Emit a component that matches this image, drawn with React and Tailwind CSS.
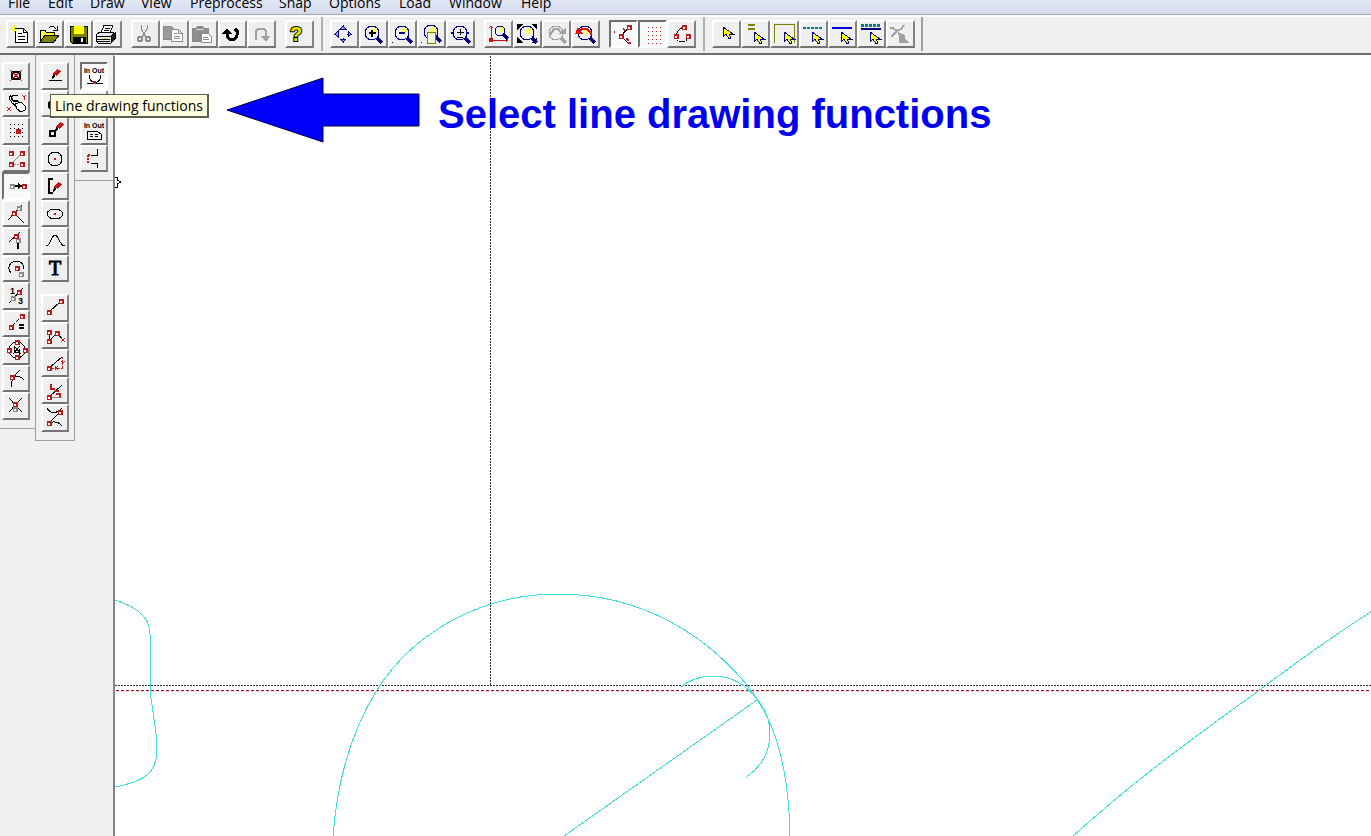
import clsx from "clsx";

const RED = "#b91c1c";
const NAVY = "#000080";
const GRAY = "#8a8a8a";
const OLIVE = "#808000";

const menus = [
  { label: "File", width: "w-[40px]" },
  { label: "Edit", width: "w-[42px]" },
  { label: "Draw", width: "w-[51px]" },
  { label: "View", width: "w-[49px]" },
  { label: "Preprocess", width: "w-[89px]" },
  { label: "Snap", width: "w-[50px]" },
  { label: "Options", width: "w-[70px]" },
  { label: "Load", width: "w-[50px]" },
  { label: "Window", width: "w-[72px]" },
  { label: "Help", width: "w-[40px]" },
];

/* ---------- small icon parts ---------- */

function Node({ x, y, color = RED }) {
  return (
    <>
      <rect x={x - 2} y={y - 2} width="5" height="5" fill={color} stroke="none" />
      <rect x={x - 1} y={y} width="2" height="2" fill="#fff" stroke="none" />
    </>
  );
}

function Pencil({ x = 0, y = 0 }) {
  return (
    <g transform={`translate(${x} ${y})`} stroke="none">
      <path d="M5 0l4 2-4 5-4-2z" fill="#c01818" />
      <path d="M1 5l3 2-4 3z" fill="#000" />
    </g>
  );
}

function Cursor({ x, y }) {
  return (
    <path
      transform={`translate(${x} ${y})`}
      d="M0 0v10l3-3 3 5 2-1-2-4h4z"
      fill="#ffff00"
      stroke={NAVY}
      strokeWidth="1"
    />
  );
}

function Lens({ x = 14, y = 13, r = 7, color = NAVY, shine = "#ffff66" }) {
  return (
    <g fill="none" stroke={color}>
      <circle cx={x + 2} cy={y - 2} r="3" fill={shine} stroke="none" />
      <circle cx={x} cy={y} r={r} strokeWidth="1" />
      <path d={`M${x + r - 2} ${y + r - 2}l5 5`} strokeWidth="3" />
    </g>
  );
}

function InOut() {
  return (
    <text x="14" y="11" textAnchor="middle" fontSize="7" fontWeight="700" fill="#000" stroke="none">
      In Out
    </text>
  );
}

/* ---------- top toolbar ---------- */

const fileTools = [
  {
    name: "New",
    icon: (
      <>
        <path d="M9 8h8l4 4v10H9z" fill="#fff" />
        <path d="M17 8v4h4M12 13h4M12 16h7M12 19h7" />
        <path d="M4 9h7M8 5v7M5 6l5 5" stroke="#f5f500" />
      </>
    ),
  },
  {
    name: "Open",
    icon: (
      <>
        <path d="M5 22V11l2-1h3l1 2h8v3" fill="#ffff33" />
        <path d="M5 22l5-7h14l-5 7z" fill={OLIVE} />
        <path d="M14 8c2-3 5-2 7 1M22 6v4h-4" />
      </>
    ),
  },
  {
    name: "Save",
    icon: (
      <>
        <path d="M6 6h17v17H8l-2-2z" fill={OLIVE} />
        <path d="M10 6h10v8H10z" fill="#ffff00" stroke="none" />
        <path d="M9 17h12v6H9z" fill="#000" />
        <path d="M17 18h2v4h-2z" fill="#fff" stroke="none" />
      </>
    ),
  },
  {
    name: "Print",
    icon: (
      <>
        <path d="M8 13l3-8h9l-3 8z" fill="#fff" />
        <path d="M12 8h5M11 10h5" />
        <path d="M3 15l4-3h13l2 2v5l-4 4H5l-2-3z" fill="#e8e8e8" />
        <path d="M3 16h15l4-3M18 16v7M4 19h13M5 21h12" />
        <path d="M18 17l4-4v5l-4 4z" fill="#222" />
        <path d="M10 18h4" stroke="#e5e500" />
      </>
    ),
  },
];

const editTools = [
  {
    name: "Cut",
    icon: (
      <g stroke={GRAY}>
        <path d="M10 5v4l5 8M16 5v4l-5 8" />
        <circle cx="9" cy="19" r="2" strokeWidth="2" />
        <circle cx="17" cy="19" r="2" strokeWidth="2" />
      </g>
    ),
  },
  {
    name: "Copy",
    icon: (
      <g stroke={GRAY}>
        <path d="M3 6h8l4 4v9H3z" fill="#9a9a9a" />
        <path d="M11 9h7l4 4v8H11z" fill="#fff" />
        <path d="M18 9v4h4M14 13h3M14 16h6M14 18h6" />
      </g>
    ),
  },
  {
    name: "Paste",
    icon: (
      <g stroke={GRAY}>
        <path d="M3 8h4l2-2h4l2 2h4v13H3z" fill="#8f8f8f" />
        <path d="M7 9h8" stroke="#ddd" />
        <path d="M12 13h7l3 3v6H12z" fill="#fff" />
        <path d="M14 17h5M14 19h6" />
      </g>
    ),
  },
  {
    name: "Undo",
    icon: (
      <>
        <path d="M9 11v4c0 6 10 6 10 0v-4l-2-2" strokeWidth="3" />
        <path d="M4 14l5-6 5 6z" fill="#000" stroke="none" />
      </>
    ),
  },
  {
    name: "Redo",
    icon: (
      <g stroke="#a0a0a0">
        <path d="M9 20v-9l2-2h6l2 2v7" strokeWidth="2" />
        <path d="M14 16h9l-4 6z" fill="#a0a0a0" stroke="none" />
      </g>
    ),
  },
];

const helpTools = [
  {
    name: "Help",
    icon: (
      <text
        x="11"
        y="21"
        textAnchor="middle"
        fontSize="20"
        fontWeight="700"
        fill="#e8e800"
        stroke="#000"
        strokeWidth="2"
        paintOrder="stroke"
      >
        ?
      </text>
    ),
  },
];

const zoomTools = [
  {
    name: "Pan",
    icon: (
      <g stroke={NAVY}>
        <path d="M13 5v5M13 18v5M4 14h5M17 14h5" />
        <path d="M10 9l3-3 3 3zM10 19l3 3 3-3zM8 11l-3 3 3 3zM18 11l3 3-3 3z" fill="#9a9ad0" />
      </g>
    ),
  },
  {
    name: "Zoom in",
    icon: (
      <>
        <Lens x={13} />
        <path d="M10 13h7M13 10v7" strokeWidth="2" />
      </>
    ),
  },
  {
    name: "Zoom out",
    icon: (
      <>
        <Lens />
        <path d="M11 13h6" stroke={NAVY} strokeWidth="2" />
        <path d="M4 22h1" stroke={NAVY} />
      </>
    ),
  },
  {
    name: "Zoom window",
    icon: (
      <>
        <Lens y={12} />
        <path d="M10 12h8v11h-8z" fill="#f5f5d8" stroke={OLIVE} />
        <path d="M4 22h1" stroke={NAVY} />
      </>
    ),
  },
  {
    name: "Zoom scale",
    icon: (
      <>
        <Lens shine="#e8e8f8" />
        <path d="M11 12h7M14 9v6M11 17h6" />
        <path d="M4 13l4-2v4zM24 13l-4-2v4z" fill={NAVY} stroke="none" />
      </>
    ),
  },
];

const viewTools = [
  {
    name: "Zoom origin",
    icon: (
      <>
        <path d="M7 6v14h17M5 8l2-2 2 2M22 18l2 2-2 2" stroke="#d01010" />
        <circle cx="7" cy="20" r="2" fill="#d01010" stroke="#d01010" />
        <Lens x={16} y={11} r={5} />
      </>
    ),
  },
  {
    name: "Zoom all",
    icon: (
      <>
        <path d="M4 4h6l-6 6zM18 4h6v6zM4 17v6h6zM24 17v6h-6z" fill="#000" stroke="none" />
        <Lens />
      </>
    ),
  },
  {
    name: "Zoom next",
    icon: (
      <>
        <Lens color="#a0a0a0" shine="#eee" />
        <path d="M8 15l4-6h4l4 5" stroke="#a0a0a0" strokeWidth="2" />
        <path d="M16 14h8V8z" fill="#a0a0a0" stroke="none" />
      </>
    ),
  },
  {
    name: "Zoom previous",
    icon: (
      <>
        <Lens />
        <path d="M8 11l3-2h5l4 4v2" stroke="#d81010" strokeWidth="2" />
        <path d="M4 14l3-7 5 7z" fill="#d81010" stroke="none" />
      </>
    ),
  },
];

const snapTools = [
  {
    name: "Snap to node",
    pressed: true,
    icon: (
      <>
        <path d="M20 7l-8 9 7 7" />
        <path d="M5 12h1M14 9l2 1M17 19l3 1M19 23h3" stroke={RED} strokeWidth="2" />
        <Node x={20} y={7} />
        <Node x={12} y={16} />
      </>
    ),
  },
  {
    name: "Snap to grid",
    pressed: true,
    icon: (
      <path
        d="M10 7h13M10 11h13M10 15h13M10 19h13M10 23h13"
        stroke="#b52a2a"
        strokeWidth="1"
        strokeDasharray="1 3"
      />
    ),
  },
  {
    name: "Close contour",
    icon: (
      <>
        <path d="M17 7c-4 1-7 4-8 9c0 8 12 8 12 0" />
        <Node x={17} y={7} />
        <Node x={9} y={16} />
        <Node x={21} y={16} />
      </>
    ),
  },
];

const selectTools = [
  { name: "Select", icon: <Cursor x={11} y={7} /> },
  {
    name: "Select layer",
    icon: (
      <>
        <path d="M7 5h7M7 9h7" stroke={OLIVE} strokeWidth="2" />
        <Cursor x={13} y={12} />
      </>
    ),
  },
  {
    name: "Select window",
    icon: (
      <>
        <path d="M4 23V4h20v19" stroke={OLIVE} />
        <Cursor x={14} y={12} />
      </>
    ),
  },
  {
    name: "Select dashed",
    icon: (
      <>
        <path d="M4 8h20" stroke="#008080" strokeWidth="2" strokeDasharray="3 1" />
        <Cursor x={13} y={12} />
      </>
    ),
  },
  {
    name: "Select line",
    icon: (
      <>
        <path d="M4 8h20" stroke="#0000e0" strokeWidth="2" />
        <Cursor x={13} y={12} />
      </>
    ),
  },
  {
    name: "Select all lines",
    icon: (
      <>
        <path d="M4 5h20" stroke="#008080" strokeWidth="3" strokeDasharray="3 1" />
        <path d="M4 9h20" stroke={NAVY} strokeWidth="2" />
        <Cursor x={13} y={12} />
      </>
    ),
  },
  {
    name: "Trim",
    icon: (
      <g stroke="#a0a0a0">
        <path d="M4 8h3l4 3 4-2 3-4M11 11L5 17" strokeWidth="2" />
        <path d="M12 12l7 3v4l5 4H13v-5z" fill="#a0a0a0" stroke="none" />
      </g>
    ),
  },
];

/* ---------- side tool boxes ---------- */

const pointTools = [
  {
    name: "Free point",
    icon: (
      <>
        <rect x="10" y="10" width="8" height="7" strokeWidth="2" />
        <path d="M8 8l12 11M20 8L8 19" stroke={RED} />
      </>
    ),
  },
  {
    name: "Mouse input",
    icon: (
      <>
        <path d="M16 5h-5l-2 2 2 3 5 1 2 2M9 5L7 8l3 5 4 3" />
        <path d="M11 6l-2 2 2 3 5 1" />
        <path d="M13 14l6-2 4 4v4l-4 2-4-3z" fill="#fff" />
        <path d="M5 17l4 4M9 17l-4 4M20 5l2 2 2-2M22 7v3" stroke={RED} />
      </>
    ),
  },
  {
    name: "Grid point",
    icon: (
      <>
        <path d="M8 7h14M8 11h14M8 15h14M8 19h14" strokeDasharray="1 3" />
        <rect x="14" y="12" width="4" height="4" fill={RED} stroke={RED} />
      </>
    ),
  },
  {
    name: "Coordinates",
    icon: (
      <>
        <path d="M9 19L20 8M9 19h11" stroke={GRAY} strokeDasharray="2 1" />
        <Node x={9} y={8} />
        <Node x={20} y={8} />
        <Node x={9} y={19} />
        <Node x={20} y={19} />
      </>
    ),
  },
  {
    name: "End point",
    pressed: true,
    icon: (
      <>
        <path d="M10 14h11" strokeWidth="2" />
        <path d="M16 11l5 3-5 3z" fill="#000" stroke="none" />
        <Node x={10} y={14} color={GRAY} />
        <Node x={22} y={14} />
      </>
    ),
  },
  {
    name: "Intersection",
    icon: (
      <>
        <path d="M6 20L20 5M12 13l10 10" />
        <Node x={17} y={8} color={GRAY} />
        <Node x={12} y={13} />
      </>
    ),
  },
  {
    name: "Nearest point",
    icon: (
      <>
        <path d="M7 15L18 5" />
        <path d="M16 14v8" strokeWidth="2" />
        <Node x={16} y={13} color={GRAY} />
        <Node x={14} y={9} />
      </>
    ),
  },
  {
    name: "Arc centre",
    icon: (
      <>
        <path d="M9 18c-5-6 0-12 6-12c4 0 7 4 7 8" />
        <Node x={15} y={13} />
        <Node x={19} y={19} color={GRAY} />
      </>
    ),
  },
  {
    name: "Divide",
    icon: (
      <>
        <path d="M7 21L21 6" />
        <text x="8" y="12" fontSize="9" fontWeight="700" fill="#000" stroke="none">1</text>
        <text x="16" y="22" fontSize="9" fontWeight="700" fill="#000" stroke="none">3</text>
        <Node x={17} y={10} />
        <Node x={11} y={16} color={GRAY} />
      </>
    ),
  },
  {
    name: "Distance",
    icon: (
      <>
        <path d="M9 17L20 6" strokeDasharray="5 2" />
        <path d="M17 15h5M17 18h5" strokeWidth="2" />
        <Node x={9} y={17} />
        <Node x={20} y={6} />
      </>
    ),
  },
  {
    name: "Quadrant",
    icon: (
      <>
        <circle cx="15" cy="13" r="8" />
        <path d="M12 9l7 8M18 9l-7 8M12 9v6h6M17 12v6" />
        <Node x={15} y={5} />
        <Node x={7} y={13} />
        <Node x={23} y={13} />
        <Node x={15} y={20} />
      </>
    ),
  },
  {
    name: "Tangent",
    icon: (
      <>
        <path d="M9 22c0-8 3-11 9-17M10 12c6-2 9-1 12 3" />
        <Node x={10} y={12} />
      </>
    ),
  },
  {
    name: "Crossing",
    icon: (
      <>
        <path d="M7 6l13 14M20 6L7 20" />
        <Node x={13} y={17} color={GRAY} />
        <Node x={13} y={12} />
      </>
    ),
  },
];

const drawTools = [
  {
    name: "Line drawing",
    icon: (
      <>
        <path d="M8 18h13" />
        <Pencil x={11} y={7} />
      </>
    ),
  },
  { name: "Arc drawing", icon: <path d="M11 10l-3 3v4l3 3" strokeWidth="2" /> },
  {
    name: "Rectangle",
    icon: (
      <>
        <rect x="9" y="14" width="5" height="5" strokeWidth="2" />
        <Pencil x={14} y={5} />
      </>
    ),
  },
  {
    name: "Circle",
    icon: (
      <>
        <circle cx="14" cy="14" r="7" />
        <rect x="13" y="13" width="2" height="2" fill="#f00000" stroke="none" />
      </>
    ),
  },
  {
    name: "Polyline",
    icon: (
      <>
        <path d="M12 7H8v14h4" strokeWidth="2" />
        <Pencil x={12} y={10} />
      </>
    ),
  },
  {
    name: "Ellipse",
    icon: (
      <>
        <ellipse cx="14" cy="14" rx="8" ry="5" />
        <path d="M14 13l1 1-1 1-1-1z" stroke="#f00000" />
      </>
    ),
  },
  { name: "Spline", icon: <path d="M5 19c5 0 5-11 9-11s4 11 10 11" /> },
  {
    name: "Text",
    icon: (
      <text x="14" y="20" textAnchor="middle" className="font-['Liberation_Serif',serif]" fontSize="20" fill="#000" strokeWidth="1">
        T
      </text>
    ),
  },
];

const lineTools = [
  {
    name: "Single line",
    icon: (
      <>
        <path d="M8 18L20 7" />
        <Node x={8} y={18} />
        <Node x={20} y={7} />
      </>
    ),
  },
  {
    name: "Connected lines",
    icon: (
      <>
        <path d="M8 10v9l8-8 6 7" />
        <path d="M20 16l4 4M24 16l-4 4" stroke={RED} />
        <Node x={8} y={10} />
        <Node x={8} y={19} />
        <Node x={16} y={11} />
      </>
    ),
  },
  {
    name: "Relative line",
    icon: (
      <>
        <path d="M8 19L21 8" />
        <path d="M8 19h15M21 8v12" stroke={RED} strokeDasharray="2 1" />
        <path d="M14 17l3 4M17 17l-3 4M20 12l2 2 2-2" stroke={RED} />
        <Node x={8} y={19} />
      </>
    ),
  },
  {
    name: "Angled line",
    icon: (
      <>
        <path d="M8 20L21 8" />
        <path d="M8 20h13" stroke={GRAY} />
        <path d="M10 7v5h4M14 14h4M15 17h4v3" stroke={RED} strokeWidth="2" />
        <Node x={8} y={20} />
      </>
    ),
  },
  {
    name: "Tangent line",
    icon: (
      <>
        <path d="M8 19L19 8M6 4c3 6 10 6 15 0M6 22c4-6 11-5 15 0" />
        <Node x={8} y={19} />
        <Node x={19} y={8} />
      </>
    ),
  },
];

const contourTools = [
  {
    name: "In out contour",
    pressed: true,
    icon: (
      <>
        <InOut />
        <path d="M7 21h16M9 13c0 10 12 10 12 0" />
        <rect x="13" y="19" width="3" height="3" fill={RED} stroke="none" />
      </>
    ),
  },
  { name: "In out arc", icon: <path d="M7 22h16" /> },
  {
    name: "In out sheet",
    icon: (
      <>
        <InOut />
        <path d="M7 22v-8h10l4 3v5zM10 17h3M15 17h3M10 19h3M15 19h3" />
      </>
    ),
  },
  {
    name: "Open contour",
    icon: (
      <>
        <path d="M17 4v6h-6M11 18h6v5" />
        <path d="M8 10v9M8 10h3" stroke={RED} strokeWidth="2" strokeDasharray="2 1" />
      </>
    ),
  },
];

function ToolButton({ tool, side }) {
  return (
    <button
      type="button"
      aria-label={tool.name}
      aria-pressed={tool.pressed}
      className={clsx(
        "shrink-0 border-2 overflow-hidden",
        side ? "block w-7 h-7 even:h-[27px]" : "w-[29px] h-7",
        tool.pressed
          ? "bg-[#fafafa] border-t-[#707070] border-l-[#707070] border-r-white border-b-white"
          : "bg-[#efefef] border-t-white border-l-white border-r-[#848484] border-b-[#747474]"
      )}
    >
      <svg
        viewBox="0 0 28 28"
        width="28"
        height="28"
        className="-m-[2px] max-w-none font-['Liberation_Sans',sans-serif]"
        fill="none"
        stroke="#000"
        shapeRendering="crispEdges"
      >
        {tool.icon}
      </svg>
    </button>
  );
}

function ToolGroup({ tools, label }) {
  return (
    <div role="group" aria-label={label} className="flex">
      {tools.map((tool) => (
        <ToolButton key={tool.name} tool={tool} />
      ))}
    </div>
  );
}

function ToolColumn({ tools, label }) {
  return (
    <div role="group" aria-label={label} className="flex flex-col">
      {tools.map((tool) => (
        <ToolButton key={tool.name} tool={tool} side />
      ))}
    </div>
  );
}

function Drawing() {
  return (
    <svg className="absolute inset-0 w-full h-full" fill="none" shapeRendering="crispEdges">
      {/* Axes */}
      <path d="M375.5 0v629M0 629.5h3000" stroke="#333" strokeDasharray="2 1" />
      <path d="M1 634.5h3000" stroke="#a01520" strokeDasharray="3 2" />
      <path d="M1 635.5h3000" stroke="#ffc9c9" strokeDasharray="3 2" />

      {/* Contours */}
      <g stroke="#42dede">
        <path d="M0 544C18 550 35 559 35 578V630C36 652 42 672 42 693C42 716 31 725 0 731" />
        <path d="M218 781C221 735 233 680 262 634C298 577 365 538 443 538C530 538 593 582 632 629C660 664 674 710 675 781" />
        <path d="M449 780L642 644" />
        <path d="M566 631C575 623 587 620 600 620C618 621 630 628 643 644C650 653 655 664 655 677C655 696 646 711 631 721" />
        <path d="M957 781C1010 733 1053 700 1146 633C1180 607 1220 579 1257 555" />
      </g>

      {/* Mouse crosshair at the edge of the sheet */}
      <path d="M0 121h2v3l4 2-4 2v3H0" stroke="#000" />

      <path d="M112 54L208 22V38H304V70H208V86z" fill="#0000ff" stroke="#00003c" shapeRendering="auto" />
    </svg>
  );
}

export default function App() {
  return (
    <div className="h-screen flex flex-col overflow-hidden bg-[#f0f0f0] font-['Open_Sans','Noto_Sans',sans-serif] text-black">
      {/* Menu */}
      <nav className="h-[15px] shrink-0 flex items-end pl-2 overflow-hidden bg-linear-to-b from-[#e3e8f5] to-[#d3daed] border-b border-[#a0a5b0]">
        {menus.map((menu) => (
          <button
            key={menu.label}
            type="button"
            className={clsx("shrink-0 pb-[3px] text-left text-sm leading-4", menu.width)}
          >
            {menu.label}
          </button>
        ))}
      </nav>

      {/* Toolbar */}
      <header className="h-10 shrink-0 flex items-center pl-[6px] pb-[2px] border-t-2 border-t-white border-b-2 border-b-[#6e6e6e]">
        <div className="flex gap-[9px]">
          <ToolGroup tools={fileTools} label="File" />
          <ToolGroup tools={editTools} label="Edit" />
          <ToolGroup tools={helpTools} label="Help" />
        </div>
        <div className="w-[2px] h-full mx-[7px] shrink-0 bg-[#b0b0b0]" />
        <div className="flex gap-[9px]">
          <ToolGroup tools={zoomTools} label="Zoom" />
          <ToolGroup tools={viewTools} label="View" />
          <ToolGroup tools={snapTools} label="Snap" />
        </div>
        <div className="w-[2px] h-full mx-[7px] shrink-0 bg-[#b0b0b0]" />
        <ToolGroup tools={selectTools} label="Select" />
        <div className="w-[2px] h-full ml-[6px] shrink-0 bg-[#a0a0a0]" />
      </header>

      <div className="flex-1 min-h-0 flex">
        {/* Tool boxes */}
        <aside className="relative w-[113px] shrink-0 flex items-start">
          <div className="w-[35px] pt-[7px] pl-[2px] pb-2 border-b border-[#a0a0a0]">
            <ToolColumn tools={pointTools} label="Points" />
          </div>
          <div className="w-10 flex flex-col gap-3 pt-[7px] pl-[5px] pb-2 border-x border-b border-[#a0a0a0]">
            <ToolColumn tools={drawTools} label="Draw" />
            <ToolColumn tools={lineTools} label="Lines" />
          </div>
          <div className="w-[38px] pt-[7px] pl-[5px] pb-2 border-b border-[#a0a0a0]">
            <ToolColumn tools={contourTools} label="Contours" />
          </div>
          <div
            role="tooltip"
            className="absolute left-[50px] top-[39px] z-10 h-6 px-1 whitespace-nowrap border border-b-2 border-r-2 border-[#5f5f50] bg-[#ffffe1] text-sm leading-[21px]"
          >
            Line drawing functions
          </div>
        </aside>

        {/* Sheet */}
        <main className="relative flex-1 min-w-0 overflow-hidden bg-white border-l-2 border-t border-l-[#858585] border-t-white">
          <Drawing />
          <h1 className="relative pt-9 pl-[323px] whitespace-nowrap font-['Liberation_Sans',sans-serif] text-[40px] leading-[44px] font-bold text-[#0000f0]">
            Select line drawing functions
          </h1>
        </main>
      </div>
    </div>
  );
}
